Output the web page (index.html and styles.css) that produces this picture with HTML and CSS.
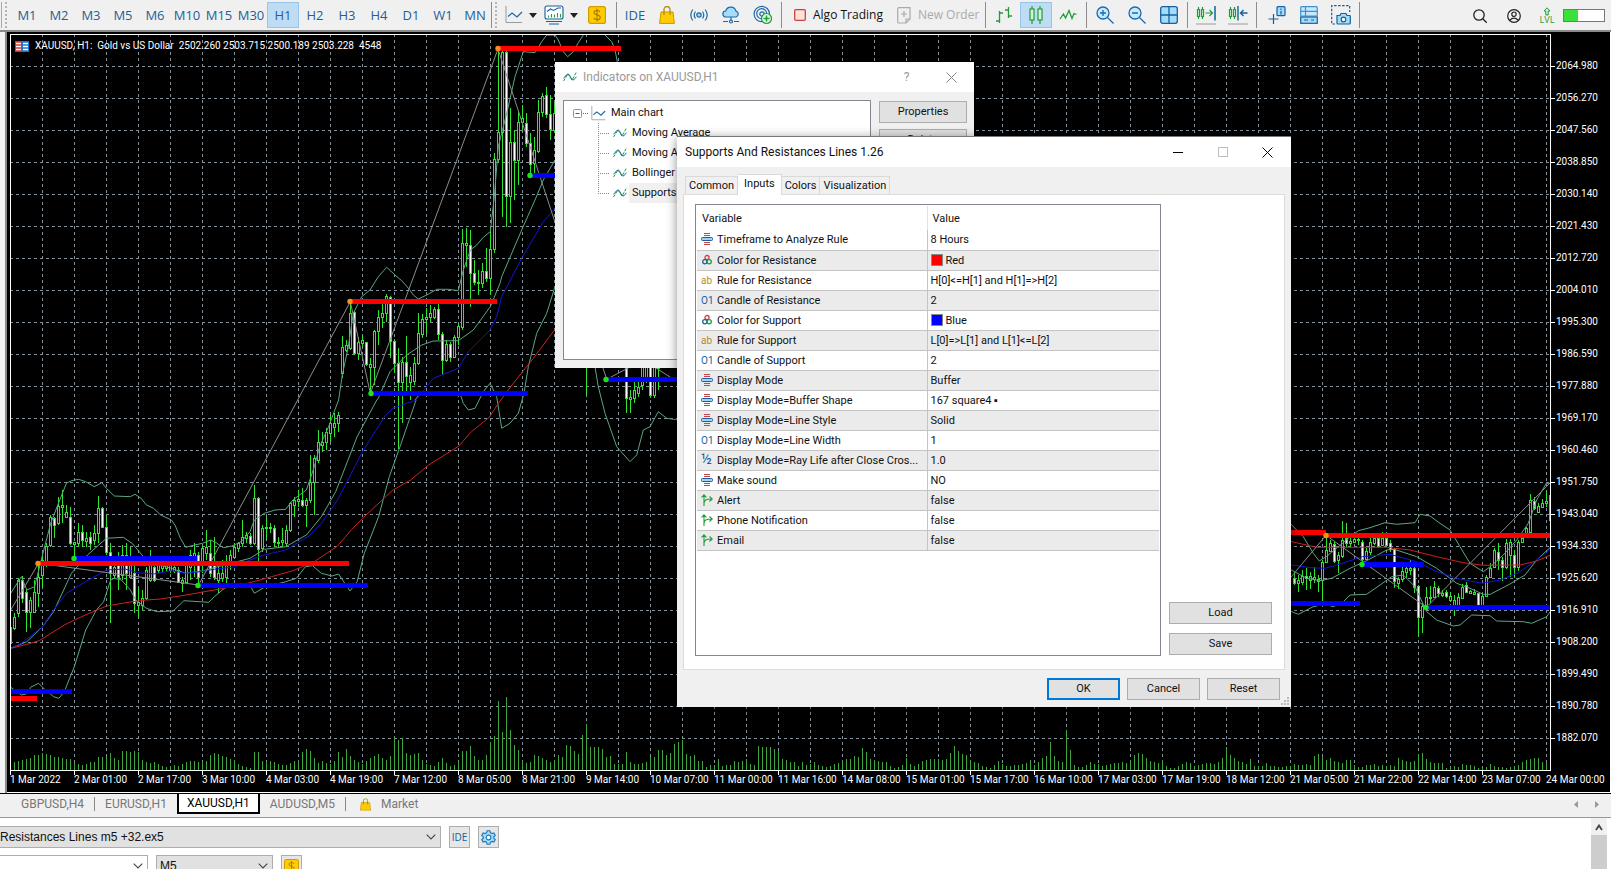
FILE: index.html
```html
<!DOCTYPE html>
<html lang="en">
<head>
<meta charset="utf-8">
<meta name="viewport" content="width=device-width, initial-scale=1">
<title>XAUUSD,H1</title>
<link rel="stylesheet" href="styles.css">
</head>
<body>
<svg class="defs" aria-hidden="true">
  <symbol id="i-enum" viewBox="0 0 12 12"><path d="M3 .5h6M3 2.500h6M3 9.500h6M3 11.500h6" stroke="#c8414f"/><rect x=".5" y="4.500" width="11" height="3" rx="1" fill="#9fd4f5" stroke="#1560a0"/></symbol>
  <symbol id="i-color" viewBox="0 0 12 12"><g fill="none" stroke-width="1.300"><circle cx="6" cy="3.600" r="2.100" stroke="#c8414f"/><circle cx="3.800" cy="7.800" r="2.100" stroke="#1560a0"/><circle cx="8.200" cy="7.800" r="2.100" stroke="#1f9d3a"/></g></symbol>
  <symbol id="i-bool" viewBox="0 0 12 12"><path d="M3 12V1M.5 3.500 3 .8l2.500 2.700M3 9.500C3 6 5 5 10.800 5M8.500 2.500 11.200 5 8.500 7.500" fill="none" stroke="#1f9d3a" stroke-width="1.100"/></symbol>
  <symbol id="i-wave" viewBox="0 0 14 14"><path d="M.5 11 5 4l4 6 4.500-8" fill="none" stroke="#1f9d3a" stroke-dasharray="3 1.200"/><path d="M.5 8C2 8 3 4 5 4s3 6 5 6 2-3 3.500-3" fill="none" stroke="#1560a0"/></symbol>
  <symbol id="i-axes" viewBox="0 0 18 18"><path d="M1 0v16.500h16" fill="none" stroke="#9a9a9a"/><path d="M3 10.500 7 7l5 4 5-5" fill="none" stroke="#1e6aa8" stroke-width="1.300"/></symbol>
  <symbol id="i-dollar" viewBox="0 0 18 18"><rect x=".6" y=".6" width="16.800" height="16.800" rx="2" fill="#fc0" stroke="#d39b00" stroke-width="1.200"/><path d="M12 6c-.5-1.200-1.500-1.700-3-1.700-1.700 0-3 .8-3 2.200 0 3.200 6.200 1.600 6.200 4.900 0 1.500-1.400 2.300-3.200 2.300-1.700 0-2.800-.7-3.200-2M9 2.500v13" fill="none" stroke="#b07d00" stroke-width="1.200"/></symbol>
  <symbol id="i-bag" viewBox="0 0 16 18"><path d="M2 6h12l1.400 11.400H.6z" fill="#fc0" stroke="#c99700"/><path d="M5 9V3.500a3 3 0 0 1 6 0V9" fill="none" stroke="#b98a00" stroke-width="1.300"/></symbol>
  <symbol id="i-chev" viewBox="0 0 10 6"><path d="m.7.700 4.300 4.300L9.300.7" fill="none" stroke="#444" stroke-width="1.100"/></symbol>
  <symbol id="i-caret" viewBox="0 0 8 5"><path d="M0 0h8L4 5z" fill="#222"/></symbol>
</svg>

<header class="toolbar">
  <nav class="group frames" aria-label="Timeframe">
    <button>M1</button><button>M2</button><button>M3</button><button>M5</button><button>M6</button><button>M10</button><button>M15</button><button>M30</button><button class="on">H1</button><button>H2</button><button>H3</button><button>H4</button><button>D1</button><button>W1</button><button>MN</button>
  </nav>
  <div class="group grip">
    <button class="wide" aria-label="Chart type"><svg width="18" height="18"><use href="#i-axes"/></svg><svg width="8" height="5"><use href="#i-caret"/></svg></button>
    <button class="wide" aria-label="Indicators"><svg width="20" height="20" viewBox="0 0 20 20" fill="none" stroke="#1560a0" stroke-width="1.100"><rect x="1" y="1" width="18" height="13" rx="2" fill="#fff"/><path d="m3 6.500 3.500-2.500 3 1.500L14 3h3"/><path d="M4.500 12.500v-2m3 2V9m3 3.500v-3m3 3V8m3 4.500V9" stroke="#1f9d3a"/><path d="M2 16.500h16M5 19h10"/></svg><svg width="8" height="5"><use href="#i-caret"/></svg></button>
    <button aria-label="Trade"><svg width="18" height="18"><use href="#i-dollar"/></svg></button>
  </div>
  <div class="group">
    <button class="ide">IDE</button>
    <button aria-label="Market"><svg width="16" height="18"><use href="#i-bag"/></svg></button>
    <button aria-label="Signals"><svg width="18" height="14" viewBox="0 0 18 14" fill="none" stroke="#1e6aa8" stroke-width="1.200"><circle cx="9" cy="7" r="2.200" fill="#9fd4f5"/><path d="M5.500 3.500q-2.500 3.500 0 7M12.500 3.500q2.500 3.500 0 7M2.800 1.500q-4 5.500 0 11M15.200 1.500q4 5.500 0 11"/></svg></button>
    <button aria-label="Virtual hosting"><svg width="18" height="18" viewBox="0 0 18 18" fill="none" stroke="#1e6aa8" stroke-width="1.200"><path d="M4 11a3 3 0 0 1-.3-6A5.300 5.300 0 0 1 14 5.200 3 3 0 0 1 14 11z" fill="#a5dcfb"/><path d="M9 11v4M1 15.500h5M12 15.500h5"/><circle cx="9" cy="15.500" r="1.500"/></svg></button>
    <button aria-label="Add service"><svg width="20" height="20" viewBox="0 0 20 20" fill="none" stroke="#1e6aa8" stroke-width="1.200"><path d="M16.500 9A7.700 7.700 0 1 0 9 16.700M13.700 9A5 5 0 1 0 9 13.700"/><circle cx="9" cy="9" r="2.200"/><circle cx="13.500" cy="13.500" r="5" fill="#e3f7e6" stroke="#1f9d3a"/><path d="M13.500 10.500v6m-3-3h6" stroke="#1f9d3a" stroke-width="1.500"/></svg></button>
  </div>
  <div class="group">
    <button class="label algo"><svg width="12" height="12" viewBox="0 0 12 12"><rect x=".7" y=".7" width="10.600" height="10.600" rx="1" fill="#fde3d6" stroke="#c8414f" stroke-width="1.300"/></svg>Algo Trading</button>
    <button class="label order" disabled><svg width="14" height="17" viewBox="0 0 14 17" fill="none" stroke="#aaa" stroke-width="1.200"><path d="M2 .7h11V12l-4 4H2Q.7 16 .7 15V2Q.7.700 2 .7zM13 12H9v4M7 4v6M4 7h6"/></svg>New Order</button>
  </div>
  <div class="group">
    <button aria-label="Bars"><svg width="18" height="16" viewBox="0 0 18 16" fill="none" stroke="#1f9d3a" stroke-width="1.300"><path d="M4.500 4v12M1 14h3.500M4.500 6H8M13.500 0v11M10 3h3.500M13.500 9H17"/></svg></button>
    <button class="on" aria-label="Candles"><svg width="16" height="18" viewBox="0 0 16 18" fill="#d8f5dc" stroke="#1f9d3a" stroke-width="1.200"><path d="M4 0v18M12 0v18"/><rect x="2" y="3" width="4" height="11"/><rect x="10" y="3" width="4" height="11"/></svg></button>
    <button aria-label="Line"><svg width="18" height="12" viewBox="0 0 18 12" fill="none" stroke="#1f9d3a" stroke-width="1.300"><path d="m1 10 3.500-5 2 4L10 1.500l3 8 2-5 2.500 1"/></svg></button>
  </div>
  <div class="group">
    <button aria-label="Zoom in"><svg width="18" height="18" viewBox="0 0 18 18" fill="#c5e9ff" stroke="#1e6aa8" stroke-width="1.300"><circle cx="7" cy="7" r="6"/><path d="m11.500 11.500 6 6M7 4v6M4 7h6"/></svg></button>
    <button aria-label="Zoom out"><svg width="18" height="18" viewBox="0 0 18 18" fill="#c5e9ff" stroke="#1e6aa8" stroke-width="1.300"><circle cx="7" cy="7" r="6"/><path d="m11.500 11.500 6 6M4 7h6"/></svg></button>
    <button aria-label="Tile windows"><svg width="18" height="18" viewBox="0 0 18 18" fill="#a5dcfb" stroke="#1560a0" stroke-width="1.300"><rect x=".7" y=".7" width="16.600" height="16.600" rx="2"/><path d="M9 1v16M1 9h16"/></svg></button>
  </div>
  <div class="group">
    <button aria-label="Chart shift"><svg width="20" height="20" viewBox="0 0 20 20" fill="none" stroke="#1f9d3a" stroke-width="1.200"><path d="M2.500 2v12M6.500 2v12"/><path d="M1.500 4.500h2v7h-2zM5.500 4.500h2v7h-2z" fill="#d8f5dc"/><path d="M9.500 8h7m-3-3 3 3-3 3"/><path d="M19 1v14.500" stroke="#1560a0" stroke-width="1.500"/><path d="M0 19h20" stroke="#aaa"/></svg></button>
    <button aria-label="Auto scroll"><svg width="20" height="20" viewBox="0 0 20 20" fill="none" stroke="#1f9d3a" stroke-width="1.200"><path d="M2.500 2v12M6.500 2v12"/><path d="M1.500 4.500h2v7h-2zM5.500 4.500h2v7h-2z" fill="#d8f5dc"/><path d="M19.500 8h-7m3-3-3 3 3 3M10 1v14.500" stroke="#1560a0" stroke-width="1.400"/><path d="M0 19h20" stroke="#aaa"/></svg></button>
  </div>
  <div class="group last">
    <button aria-label="Crosshair"><svg width="18" height="18" viewBox="0 0 18 18" fill="none" stroke="#1560a0" stroke-width="1.200"><path d="M5.500 8v10M.5 13h10"/><rect x="9" y=".7" width="8" height="9" rx="1" fill="#a5dcfb"/><path d="M13 2.500V4m0 1v3.500"/></svg></button>
    <button aria-label="Data window"><svg width="18" height="18" viewBox="0 0 18 18" fill="none" stroke="#4391c9" stroke-width="1.200"><rect x=".7" y=".7" width="16.600" height="9.300" rx="1" fill="#c5e9ff"/><path d="M1 5.300h16M5.500 1v9"/><rect x=".7" y="11" width="16.600" height="6.300" fill="#a5dcfb" stroke="#1560a0"/><path d="M4 14h4m3 0h3" stroke="#1560a0"/></svg></button>
    <button aria-label="Screenshot"><svg width="20" height="20" viewBox="0 0 20 20" fill="none" stroke="#1560a0" stroke-width="1.200"><path d="M4 19H.7V.7h18V7" stroke-dasharray="2.500 1.500"/><path d="M6 10.500h3l1-2h5l1 2h2.500q.8 0 .8.800V18q0 1-1 1H7q-1 0-1-1z" fill="#a5dcfb"/><circle cx="12.500" cy="14.500" r="2.300" fill="#fff"/></svg></button>
  </div>
  <div class="status">
    <button aria-label="Search"><svg width="14" height="14" viewBox="0 0 14 14" fill="none" stroke="#222" stroke-width="1.300"><circle cx="6" cy="6" r="5.200"/><path d="m9.700 9.700 4 4"/></svg></button>
    <button aria-label="Account"><svg width="14" height="14" viewBox="0 0 14 14" fill="none" stroke="#222" stroke-width="1.200"><circle cx="7" cy="7" r="6.300"/><circle cx="7" cy="5.200" r="2.200"/><path d="M2.700 11.300q4.300-4.500 8.600 0"/></svg></button>
    <button class="lvl" aria-label="Level"><svg width="8" height="9" viewBox="0 0 8 9"><path d="M4 .8 7 4H5.200v4H2.800V4H1z" fill="#d8f5dc" stroke="#1f9d3a"/></svg><span>LVL</span></button>
    <span class="meter"><i></i></span>
  </div>
</header>

<main class="workspace">
  <aside class="edge"></aside>
  <section class="chart" aria-label="XAUUSD H1 chart">
    <div class="plot">
      <svg id="plot" viewBox="10 34 1541 737" preserveAspectRatio="none"></svg>
      <p class="caption"><svg width="14" height="11" viewBox="0 0 14 11"><path fill="#d33" d="M0 0h7v11H0z"/><path fill="#1878d0" d="M7 0h7v11H7z"/><path d="M1 2.500h5M1 5.500h5M1 8.500h5M8 2.500h5M8 5.500h5M8 8.500h5" stroke="#fff" stroke-width="1.500"/></svg><span>XAUUSD, H1:&nbsp; Gold vs US Dollar&nbsp; 2502.260 2503.715 2500.189 2503.228&nbsp; 4548</span></p>
    </div>
    <ol class="prices" id="prices"></ol>
    <ol class="times" id="times"></ol>
  </section>

  <section class="window indicators" aria-label="Indicators">
    <header class="titlebar faded">
      <svg width="14" height="14"><use href="#i-wave"/></svg>
      <h2>Indicators on XAUUSD,H1</h2>
      <button aria-label="Help">?</button>
      <button aria-label="Close"><svg width="11" height="11" viewBox="0 0 11 11"><path d="m.5.500 10 10m0-10-10 10" stroke="#888"/></svg></button>
    </header>
    <div class="ind-body">
      <div class="tree">
        <div class="root"><svg width="18" height="15" viewBox="0 0 18 15"><rect x=".5" y="3.500" width="8" height="8" rx="1" fill="#fff" stroke="#8a929c"/><path d="M2.500 7.500h4" stroke="#445a80"/><path d="M10 7.500h6" stroke="#666" stroke-dasharray="1 1"/></svg><svg width="15" height="15"><use href="#i-axes"/></svg><span>Main chart</span></div>
        <ul>
          <li><svg width="14" height="14"><use href="#i-wave"/></svg><span>Moving Average</span></li>
          <li><svg width="14" height="14"><use href="#i-wave"/></svg><span>Moving Average</span></li>
          <li><svg width="14" height="14"><use href="#i-wave"/></svg><span>Bollinger Bands</span></li>
          <li><svg width="14" height="14"><use href="#i-wave"/></svg><span class="sel">Supports And Resistances</span></li>
        </ul>
      </div>
      <div class="side"><button class="btn">Properties</button><button class="btn">Delete</button></div>
    </div>
  </section>

  <section class="window inputs" aria-label="Supports And Resistances Lines">
    <header class="titlebar">
      <h2>Supports And Resistances Lines 1.26</h2>
      <button aria-label="Minimize"><svg width="10" height="10" viewBox="0 0 10 10"><path d="M0 5.500h10" stroke="#000"/></svg></button>
      <button aria-label="Maximize" disabled><svg width="10" height="10" viewBox="0 0 10 10"><path d="M.5.500h9v9h-9z" fill="none" stroke="#bbb"/></svg></button>
      <button aria-label="Close"><svg width="11" height="11" viewBox="0 0 11 11"><path d="m.5.500 10 10m0-10-10 10" stroke="#000"/></svg></button>
    </header>
    <div class="dialog-body">
      <div class="tabs"><button>Common</button><button class="on">Inputs</button><button>Colors</button><button>Visualization</button></div>
      <div class="pane">
        <div class="grid-box">
          <table>
            <thead><tr><th>Variable</th><th>Value</th></tr></thead>
            <tbody>
              <tr><td><svg><use href="#i-enum"/></svg>Timeframe to Analyze Rule</td><td>8 Hours</td></tr>
              <tr><td><svg><use href="#i-color"/></svg>Color for Resistance</td><td><i class="swatch red"></i>Red</td></tr>
              <tr><td><b class="ab">ab</b>Rule for Resistance</td><td>H[0]&lt;=H[1] and H[1]=&gt;H[2]</td></tr>
              <tr><td><b>O1</b>Candle of Resistance</td><td>2</td></tr>
              <tr><td><svg><use href="#i-color"/></svg>Color for Support</td><td><i class="swatch blue"></i>Blue</td></tr>
              <tr><td><b class="ab">ab</b>Rule for Support</td><td>L[0]=&gt;L[1] and L[1]&lt;=L[2]</td></tr>
              <tr><td><b>O1</b>Candle of Support</td><td>2</td></tr>
              <tr><td><svg><use href="#i-enum"/></svg>Display Mode</td><td>Buffer</td></tr>
              <tr><td><svg><use href="#i-enum"/></svg>Display Mode=Buffer Shape</td><td>167 square4 ▪</td></tr>
              <tr><td><svg><use href="#i-enum"/></svg>Display Mode=Line Style</td><td>Solid</td></tr>
              <tr><td><b>O1</b>Display Mode=Line Width</td><td>1</td></tr>
              <tr><td><b class="half">½</b>Display Mode=Ray Life after Close Cros...</td><td>1.0</td></tr>
              <tr><td><svg><use href="#i-enum"/></svg>Make sound</td><td>NO</td></tr>
              <tr><td><svg><use href="#i-bool"/></svg>Alert</td><td>false</td></tr>
              <tr><td><svg><use href="#i-bool"/></svg>Phone Notification</td><td>false</td></tr>
              <tr><td><svg><use href="#i-bool"/></svg>Email</td><td>false</td></tr>
            </tbody>
          </table>
        </div>
        <div class="pane-side"><button class="btn">Load</button><button class="btn">Save</button></div>
      </div>
      <footer><button class="btn primary">OK</button><button class="btn">Cancel</button><button class="btn">Reset</button></footer>
    </div>
    <svg class="resize" width="9" height="9" viewBox="0 0 9 9" fill="#bbb"><path d="M6 0h2v2H6zM3 3h2v2H3zM6 3h2v2H6zM0 6h2v2H0zM3 6h2v2H3zM6 6h2v2H6z"/></svg>
  </section>
</main>

<nav class="chart-tabs" aria-label="Open charts">
  <button>GBPUSD,H4</button><button class="div">EURUSD,H1</button><button class="on">XAUUSD,H1</button><button>AUDUSD,M5</button><button class="div market"><svg width="11" height="13" viewBox="0 0 16 18"><use href="#i-bag"/></svg>Market</button>
  <span class="arrows"><svg width="4" height="7" viewBox="0 0 4 7"><path d="M4 0v7L0 3.500z" fill="#999"/></svg><svg width="4" height="7" viewBox="0 0 4 7"><path d="M0 0v7l4-3.500z" fill="#999"/></svg></span>
</nav>

<section class="tester" aria-label="Strategy tester">
  <div class="rows">
    <div class="row">
      <label class="combo expert"><select aria-label="Expert"><option>Resistances Lines m5 +32.ex5</option></select><svg width="10" height="6"><use href="#i-chev"/></svg></label>
      <button class="sq">IDE</button>
      <button class="sq" aria-label="Settings"><svg width="15" height="15" viewBox="0 0 16 16" fill="#a5dcfb" stroke="#1e78b8" stroke-width="1.200"><path d="M6.500.8h3l.5 2.100 1.600.9 2.100-.6 1.500 2.600-1.600 1.500v1.400l1.600 1.500-1.500 2.600-2.100-.6-1.600.9-.5 2.100h-3L6 13.100l-1.600-.9-2.100.6-1.500-2.600 1.600-1.500V7.300L.8 5.800l1.500-2.600 2.100.6L6 2.900z"/><circle cx="8" cy="8" r="2.500" fill="#fff"/></svg></button>
    </div>
    <div class="row">
      <label class="combo symbol"><select aria-label="Symbol"><option></option></select><svg width="10" height="6"><use href="#i-chev"/></svg></label>
      <label class="combo period"><select aria-label="Period"><option>M5</option></select><svg width="10" height="6"><use href="#i-chev"/></svg></label>
      <button class="sq" aria-label="Currency"><svg width="15" height="15"><use href="#i-dollar"/></svg></button>
    </div>
  </div>
  <div class="scroll"><svg width="8" height="7" viewBox="0 0 8 7"><path d="m1 6 3-4.500L7 6" fill="none" stroke="#444" stroke-width="1.800"/></svg><i></i></div>
</section>
<script src="chart.js"></script>
</body>
</html>
```

FILE: styles.css
```css
* { box-sizing: border-box; }
body { margin: 0; height: 100vh; overflow: hidden; display: flex; flex-direction: column; background: #f0f0f0; color: #111; font: 12px/16px "Open Sans", "Noto Sans", sans-serif; }
button { font: inherit; color: inherit; background: none; border: 0; padding: 0; margin: 0; }
h2, p, ol, ul { margin: 0; padding: 0; list-style: none; font: inherit; }
svg { flex: none; }
.defs { position: absolute; width: 0; height: 0; }

.toolbar { display: flex; flex: none; height: 32px; padding: 2px 0 1px; border-bottom: 2px solid #8a8a8a; background: #f0f0f0; }
.group { display: flex; height: 26px; padding: 0 2px; border-right: 1px solid #8c8c8c; }
.group button { display: flex; align-items: center; justify-content: center; width: 32px; }
.toolbar .on { background: #bedcf4; box-shadow: inset 0 0 0 1px #98c5ea; }
.frames { padding: 0 0 0 11px; color: #1f5f96; background: linear-gradient(#aaa, #aaa) 1px 0 / 1px 100% no-repeat, repeating-linear-gradient(#b5b5b5 0 2px, transparent 2px 4px) 5px 0 / 2px 100% no-repeat; }
.grip { padding: 0 3px 0 9px; background: repeating-linear-gradient(#b5b5b5 0 2px, transparent 2px 4px) 3px 0 / 2px 100% no-repeat; }
.group .wide { width: 40px; gap: 6px; }
.group.last { padding-left: 4px; }
.ide { color: #1560a0; }
.frames button, .ide { font-size: 13px; }
.group .label { width: auto; gap: 7px; padding: 0 8px 0 10px; }
.group .order { color: #aaa; padding: 0 4px 0 6px; }
.status { display: flex; align-items: center; margin-left: auto; padding-right: 6px; }
.status button { width: 34px; height: 26px; display: grid; place-items: center; }
.status .lvl { align-content: center; color: #1f9d3a; font-size: 9px; line-height: 8px; width: 32px; }
.meter { width: 42px; height: 13px; border: 1px solid #777; background: #fff; }
.meter i { display: block; width: 35%; height: 100%; background: #3be03b; }

.workspace { position: relative; display: flex; flex: 1; min-height: 0; background: #fff; }
.edge { width: 7px; border-right: 2px solid #8a8a8a; background: #f3f3f3; }
.chart { flex: 1; display: grid; grid-template: minmax(0, 1fr) 21px / minmax(0, 1fr) 59px; padding: 2px 0 0 3px; margin: 0 1px 1px 0; background: #000; color: #fff; font: 10px/14px Roboto, "Open Sans", sans-serif; }
.plot { position: relative; }
.plot > svg { display: block; width: 100%; height: 100%; }
.caption { position: absolute; left: 5px; top: 5px; display: flex; align-items: center; gap: 6px; white-space: nowrap; }
.prices { display: flex; flex-direction: column; padding-top: 16px; }
.prices li { height: 32px; flex: 0 1 32px; line-height: 32px; display: flex; align-items: center; }
.prices li::before { content: ""; width: 4px; height: 1px; margin-right: 1px; background: #fff; }
.times { grid-column: 1 / 3; display: flex; padding-right: 64px; }
.times li { flex: 1 1 0; width: 0; white-space: nowrap; line-height: 18px; background: linear-gradient(#fff, #fff) 0 0 / 1px 4px no-repeat; }
.times li:last-child { flex: none; }

.window { position: absolute; background: #f0f0f0; color: #111; font: 11px/14px Roboto, "Open Sans", sans-serif; }
.titlebar { display: flex; align-items: center; height: 30px; padding-left: 8px; padding-right: 1px; background: #fff; font-size: 12px; }
.titlebar h2 { flex: 1; }
.titlebar button { width: 45px; height: 30px; display: grid; place-items: center; }
.faded { color: #999; gap: 6px; padding-right: 3px; }
.faded button { width: 39px; }
.btn { height: 22px; border: 1px solid #adadad; background: #e1e1e1; text-align: center; }
.primary { border: 2px solid #0078d7; }

.indicators { left: 555px; top: 30px; width: 419px; height: 306px; }
.ind-body { display: flex; gap: 8px; height: 276px; padding: 8px 7px 8px 8px; }
.tree { flex: 1; border: 1px solid #828790; background: #fff; padding: 2px 0 0 9px; }
.root { display: flex; align-items: center; height: 20px; }
.root span { margin-left: 5px; }
.tree ul { margin-left: 25px; background: repeating-linear-gradient(#888 0 1px, transparent 1px 2px) 0 0 / 1px 70px no-repeat; }
.tree li { display: flex; align-items: center; height: 20px; padding-left: 15px; background: repeating-linear-gradient(90deg, #888 0 1px, transparent 1px 2px) 0 10px / 11px 1px no-repeat; }
.tree li span { padding: 3px; margin-left: 2px; }
.sel { background: #f0f0f0; }
.side { width: 88px; display: grid; align-content: start; gap: 6px; padding-top: 1px; }

.inputs { left: 677px; top: 104px; width: 614px; height: 571px; border-top: 1px solid #777; box-shadow: 0 2px 10px rgba(0, 0, 0, .45); }
.dialog-body { padding: 7px 6px 0; }
.tabs { display: flex; align-items: flex-end; height: 20px; padding-left: 2px; }
.tabs button { height: 18px; padding: 1px 3px 0; border: 1px solid #d9d9d9; border-width: 1px 1px 0 0; }
.tabs button:first-child { border-left-width: 1px; }
.tabs .on { position: relative; height: 21px; margin-bottom: -1px; padding: 0 6px 2px; border-left-width: 0; background: #fff; }
.pane { display: flex; gap: 8px; height: 476px; padding: 9px 12px 13px 11px; border: 1px solid #dcdcdc; background: #fff; }
.grid-box { flex: 1; border: 1px solid #828790; padding: 1px; }
.pane-side { width: 103px; display: flex; flex-direction: column; justify-content: flex-end; gap: 9px; padding-bottom: 1px; }
table { width: 100%; border-collapse: collapse; table-layout: fixed; }
th { height: 24px; padding: 1px 5px 0; font-weight: 400; text-align: left; border-left: 1px solid #e2e2e2; }
th:first-child { width: 230px; border-left: 0; }
td { height: 20px; padding: 1px 3px 0; line-height: 14px; border-bottom: 1px solid #c4c4c4; border-left: 1px solid #c4c4c4; white-space: nowrap; vertical-align: middle; }
td:first-child { border-left: 0; }
tbody tr:nth-child(even) { background: #ebebeb; }
td svg, td b { display: inline-block; width: 12px; height: 12px; margin: 0 4px 0 0; vertical-align: -2px; overflow: visible; }
td b { color: #1560a0; font-weight: 400; font-size: 10px; line-height: 12px; vertical-align: 0; }
td .ab { color: #b98a1e; }
td .half { font-size: 14px; }
td:first-child { padding-left: 4px; }
.swatch { display: inline-block; width: 12px; height: 12px; margin-right: 3px; vertical-align: -2px; border: 1px solid #888; }
.red { background: #f00; }
.blue { background: #00f; }
.dialog-body footer { display: flex; justify-content: flex-end; gap: 7px; padding: 8px 5px 0 0; }
footer .btn { width: 73px; }
.resize { position: absolute; right: 1px; bottom: 1px; }

.chart-tabs { display: flex; flex: none; height: 25px; align-items: flex-start; padding-left: 11px; border-top: 1px solid #000; border-bottom: 1px solid #999; color: #777; font-family: Roboto, "Open Sans", sans-serif; }
.chart-tabs button { display: flex; align-items: center; justify-content: center; height: 20px; padding: 0 10px; }
.chart-tabs .div { border-left: 1px solid #888; height: 14px; margin-top: 3px; }
.chart-tabs .on { border: 1px solid #000; border-width: 0 2px 2px; padding: 0 8px; background: #fff; color: #000; }
.chart-tabs .market { gap: 10px; padding-left: 14px; }
.arrows { display: flex; gap: 17px; margin: 7px 12px 0 auto; }

.tester { display: flex; flex: none; height: 51px; background: #fff; overflow: hidden; }
.rows { flex: 1; display: grid; gap: 7px; align-content: start; padding-top: 8px; }
.row { display: flex; gap: 8px; }
.combo { display: flex; align-items: center; height: 22px; padding-right: 4px; border: 1px solid #adadad; background: #e1e1e1; }
.combo select { flex: 1; min-width: 0; height: 20px; appearance: none; border: 0; padding: 0 3px; background: none; color: #111; font: 12px "Liberation Sans", sans-serif; }
.expert { width: 441px; border-left: 0; }
.combo.expert select { padding: 0; }
.symbol { width: 148px; border-left: 0; background: #fff; }
.period { width: 117px; }
.sq { width: 21px; height: 22px; display: grid; place-items: center; border: 1px solid #adadad; background: #e6e6e6; color: #1560a0; font-size: 10px; }
.scroll { width: 16px; margin-right: 4px; display: flex; flex-direction: column; align-items: center; padding-top: 6px; background: #f0f0f0; }
.scroll i { flex: 1; width: 100%; margin-top: 4px; background: #cdcdcd; }

#plot .crisp { shape-rendering: crispEdges; }
#plot .grid { stroke: #84909a; stroke-dasharray: 3 3; fill: none; }
#plot .frame { stroke: #fff; fill: none; }
#plot .up { fill: #000; stroke: #2fe52f; }
#plot .down { fill: #fff; stroke: #2fe52f; }
#plot .vol { stroke: #3fa53f; }
#plot .band { stroke: #5aa882; fill: none; }
#plot .ma-blue { stroke: #1414d8; fill: none; }
#plot .ma-red { stroke: #d02020; fill: none; }
#plot .zigzag { stroke: #8c8c8c; fill: none; }
#plot .res { stroke: #f00; stroke-width: 5px; }
#plot .sup { stroke: #00f; stroke-width: 5px; }
#plot .dot-res { fill: #ff8c1a; }
#plot .dot-sup { fill: #19e619; }
```

FILE: chart.js
```js
const NS = 'http://www.w3.org/2000/svg';
const plot = document.getElementById('plot');
function add(tag, cls, attrs) {
  const el = document.createElementNS(NS, tag);
  el.setAttribute('class', cls);
  for (const k in attrs) el.setAttribute(k, attrs[k]);
  plot.appendChild(el);
}

// Axis labels
const prices = document.getElementById('prices');
for (let i = 0; i < 22; i++) {
  const li = document.createElement('li');
  li.textContent = (2064.98 - 8.71 * i).toFixed(3);
  prices.appendChild(li);
}
const times = ['1 Mar 2022', '2 Mar 01:00', '2 Mar 17:00', '3 Mar 10:00', '4 Mar 03:00', '4 Mar 19:00', '7 Mar 12:00', '8 Mar 05:00', '8 Mar 21:00', '9 Mar 14:00', '10 Mar 07:00', '11 Mar 00:00', '11 Mar 16:00', '14 Mar 08:00', '15 Mar 01:00', '15 Mar 17:00', '16 Mar 10:00', '17 Mar 03:00', '17 Mar 19:00', '18 Mar 12:00', '21 Mar 05:00', '21 Mar 22:00', '22 Mar 14:00', '23 Mar 07:00', '24 Mar 00:00'];
for (const t of times) {
  const li = document.createElement('li');
  li.textContent = t;
  document.getElementById('times').appendChild(li);
}

// Grid
let g = '';
for (let x = 42.5; x < 1550; x += 32) g += `M${x} 34V770`;
for (let y = 66.5; y < 760; y += 32) g += `M10 ${y}H1551`;
add('path', 'grid crisp', { d: g });

// Tick volumes, one per bar
const volumes = [0,8,9,10,11,12,15,15,17,16,15,13,13,12,11,11,7,6,5,6,8,8,13,13,13,17,12,10,19,19,18,19,18,10,8,7,8,6,4,3,4,5,4,6,8,9,9,8,8,9,15,17,16,14,13,11,10,6,4,3,2,18,18,9,8,9,8,6,5,5,7,9,9,18,21,19,12,7,9,7,6,9,18,13,21,14,10,8,6,9,12,14,16,12,10,14,33,30,32,17,15,16,17,10,6,5,4,8,12,7,4,5,8,19,19,24,14,10,10,15,28,34,69,38,73,40,25,20,9,7,8,15,14,12,10,8,10,15,13,25,24,19,16,35,46,23,23,23,21,13,14,6,6,6,18,8,6,6,7,8,13,13,20,20,15,17,26,28,30,16,14,15,9,9,3,5,5,11,4,5,5,9,8,9,11,6,5,24,23,23,23,21,19,11,10,8,8,4,8,5,6,8,5,4,3,4,6,7,9,11,11,14,13,22,18,11,10,9,8,8,4,2,3,5,12,6,4,6,9,10,11,11,11,10,11,17,24,19,16,15,10,8,7,4,3,2,5,9,6,4,4,5,5,6,7,10,5,8,12,14,28,14,9,8,40,20,5,3,3,5,8,6,6,4,5,6,7,7,8,7,9,15,17,16,12,9,8,7,10,4,2,2,4,6,8,7,4,5,6,7,7,6,8,12,23,15,12,9,8,6,11,4,4,4,7,4,4,3,3,4,4,6,5,5,6,5,14,16,13,10,12,9,8,7,10,10,5,3,3,5,5,6,4,5,4,5,4,12,10,9,8,9,16,17,11,8,7,7,7,2,3,4,3,6,5,5,4,2,2,3,6,4,3,3,2,3,4,5,8,10,11,12,12,8,7,6,8,3,2,2,2,5,8];
let v = '';
volumes.forEach((h, i) => { v += `M${10.5 + 4 * i} 770V${770 - h}`; });
add('path', 'vol crisp', { d: v });

// Polyline groups: x = x0 + px / sx, y = y0 + py / 3
const A = [0, 2.8, 400], B = [0, 3, 30], C = [400, 3, 30], D = [1270, 3, 460];
function line(cls, ...parts) {
  const pts = [];
  for (const [[x0, sx, y0], s] of parts) {
    for (const p of s.split(' ')) {
      const [x, y] = p.split(',').map(Number);
      pts.push((x0 + x / sx).toFixed(1) + ',' + (y0 + y / 3).toFixed(1));
    }
  }
  add('polyline', cls, { points: pts.join(' ') });
}

// Candles: high, body top, body bottom, low, 1 when the bar closed lower
function candles(start, y0, rows) {
  rows.trim().split(/\s+/).forEach((row, i) => {
    const [h, t, b, l, d] = row.split(',').map(Number);
    const x = 10 + 4 * (start + i), y = (n) => Math.round(y0 + n / 3);
    const cls = (d ? 'down' : 'up') + ' crisp';
    add('path', cls, { d: `M${x + .5} ${y(h)}V${y(l)}` });
    add('rect', cls, { x: x - .5, y: y(t) + .5, width: 2, height: Math.max(1, y(b) - y(t)) });
  });
}
candles(0, 400, `640,680,730,735 640,650,685,690 535,540,640,650 528,540,595,610,1 570,575,635,697,1 590,600,637,685 540,575,635,640 495,530,580,620 460,480,525,560 430,437,487,500 345,350,435,440 350,355,375,415,1 290,318,370,375 270,315,320,370 315,335,350,355 320,352,430,435,1 425,425,432,475 370,395,430,440 375,395,420,440,1 395,415,422,440 395,412,430,450,1 375,400,420,435 288,325,400,430 320,325,382,385,1 345,382,455,465,1 430,455,520,668,1 470,500,525,535 455,490,530,570,1 435,465,525,540 430,465,520,570,1 440,470,530,535 490,520,610,640,1 560,605,615,655 570,595,615,630 500,510,595,600 450,490,540,545 490,500,540,545,1 480,495,510,520 480,490,505,515 485,495,505,515 480,490,510,520 490,500,512,520 500,510,545,550,1 530,540,550,575 480,495,545,550 450,465,500,540 430,460,470,530 455,465,530,560,1 435,445,490,520 390,440,460,480 420,460,520,530,1 410,490,530,540,1 490,520,540,580 480,520,535,545 465,490,530,550 450,465,495,510 430,440,470,475 425,430,445,455 360,410,430,440 395,405,415,430 400,408,430,435,1 255,293,430,435 290,293,447,490,1 375,385,445,455 350,380,385,420 370,380,385,400 375,383,425,440,1 410,425,430,440 385,420,425,440 375,390,430,440 305,310,390,395 290,300,315,350 270,297,302,320 265,300,315,320,1 295,300,315,380 165,245,300,310 165,175,245,345 90,125,180,190 95,125,135,155 85,95,125,150 45,70,100,125 40,70,80,110 35,45,70,95`);
candles(83, 30, `918,950,1030,1045 930,945,960,965 815,848,955,960 843,845,970,975,1 920,935,970,990 915,930,938,955 935,937,1003,1008,1 985,1003,1010,1090 900,902,1010,1065 840,862,902,945 820,848,862,895 793,798,848,875 798,800,932,985,1 928,932,1000,1030,1 955,1000,1055,1258,1 980,995,1055,1180 918,995,1038,1090,1 1010,1035,1055,1110 980,1000,1052,1065 850,910,1000,1005 852,868,912,925 835,860,868,912 825,850,862,875 830,838,862,868 822,838,912,930,1 905,912,990,1035,1 930,942,990,995 935,942,980,995,1 915,920,980,985 880,888,922,945 598,640,890,900 595,640,645,710 600,645,730,830,1 690,730,755,765,1 720,757,760,795 700,722,760,775 655,722,745,755,1 590,658,745,795 368,388,658,670 55,305,388,395 60,65,305,560 60,65,497,592,1 235,337,497,580 300,337,390,510,1 245,275,390,465 225,265,275,300 250,278,340,350,1 310,340,402,435,1 320,360,400,430 210,245,362,370 190,197,245,260 172,195,252,265,1 195,252,297,330,1 220,250,300,310`);
candles(144, 30, `900,950,1000,1095`);
candles(154, 30, `980,1000,1105,1150,1 1080,1102,1107,1150 1050,1080,1105,1120 1055,1070,1090,1100 980,1000,1065,1080 980,1000,1040,1060 980,1000,1095,1105,1 980,1000,1095,1105 980,1000,1014,1080`);
candles(321, 460, `335,355,370,375,1 345,360,370,395 330,348,365,375 325,348,355,390,1 335,348,360,388 320,352,358,370 345,357,362,395 300,307,360,425 235,270,307,310 240,250,272,275 245,252,302,310,1 275,285,300,340 183,240,287,295 188,235,250,265,1 233,243,248,265 230,237,245,250 233,237,240,255 240,245,297,305,1 265,272,297,300 235,245,275,285 230,235,250,255 230,235,258,265,1 215,235,255,258 230,235,255,260,1 240,250,268,275,1 265,268,362,385,1 350,358,368,388 320,333,358,365 310,325,335,355 300,325,330,345 315,325,380,400,1 375,378,470,530,1 430,438,470,518 380,412,440,450 378,410,415,430 363,380,412,415 378,385,400,412,1 390,398,405,412 390,395,408,415,1 395,407,420,425 405,420,435,467 400,412,435,440 373,380,415,418 365,375,395,400,1 390,392,400,403 388,395,402,405 398,400,437,440,1 400,408,437,440 345,350,408,412 310,325,352,355 265,270,320,325 250,275,300,330,1 290,300,320,362,1 237,250,320,328 238,245,285,350 270,285,320,353,1 240,245,320,332 230,235,245,250 200,205,220,235 103,120,217,220 110,122,145,150,1 130,138,155,157 118,130,142,145 92,122,130,140 100,105,180,185,1`);

// Bollinger bands
line('band', [A, '30,580 60,530 75,570 97,560 119,465 142,370 160,320 186,250 200,242 220,238 240,245 264,260 285,248 298,265 320,288 365,290 378,283 395,295 410,315 430,325 450,345 480,360 490,375 505,415 520,442 545,435 567,430 590,420 605,428 625,443 650,438 675,425 700,395 712,360 740,340 770,330 800,328 820,300 858,270 880,200 895,140 920,80 948,0'], [B, '1027,1035 1045,950 1060,850 1085,800 1110,780 1135,740 1160,712 1185,735 1205,752 1228,778 1240,795 1255,807 1280,795 1310,778 1345,778 1375,782 1390,720 1411,660 1430,645 1450,622 1471,605'], [C, '283,500 295,350 320,250 345,140 370,65 405,68 425,35 440,15 465,15 475,30 490,65 503,80 520,65 535,38 550,15']);
line('band', [C, '615,15 635,35 645,60 652,95 665,150']);
line('band', [A, '30,745 75,725 119,680 150,635 200,520 245,465 298,415 345,412 370,430 400,468 430,490 480,505 520,520 570,512 610,500 700,475 740,448 800,440 858,405 900,350 940,275 1000,110 1055,0'], [B, '1135,1105 1170,1025 1220,975 1265,945 1300,933 1375,932 1420,900 1471,830 1500,760'], [C, '305,740 365,600 405,510 430,450 465,390']);
line('band', [A, '30,862 60,885 80,880 85,862 108,850 125,868 150,890 165,895 180,875 208,800 240,690 270,630 290,605 310,540 320,535 340,540 365,570 380,600 410,625 440,635 485,633 515,602 585,607 600,590 640,555 700,555 712,580 740,562 800,545 830,535 855,500 875,497 900,520 930,528 948,522 980,573 1000,545 1020,460 1060,350 1090,230 1120,140 1165,0'], [C, '45,1110 60,1090 180,1090 190,1120 205,1140 225,1135 250,1085 270,1060 290,1100 305,1195 330,1180 355,1150 372,1090 385,1010 410,910 440,850 465,770']);
line('band', [C, '580,980 595,1070 615,1150 650,1250 690,1295 710,1275 730,1200 750,1190 775,1145 800,1165 835,1170']);
line('band', [D, '60,190 100,230 130,280 148,303 168,290 200,265 235,235 265,212 300,203 345,188 380,193 435,188 450,163 480,168 510,190 540,210 570,260 600,310 640,335 661,320 700,285 740,240 775,190 800,120 829,70 841,70']);
line('band', [D, '60,328 110,355 150,362 185,355 240,325 290,302 350,270 373,268 440,290 500,325 560,370 600,385 640,403 661,403 720,372 765,345 800,300 841,262']);
line('band', [D, '60,453 85,463 110,450 130,440 165,432 190,440 220,425 240,405 290,403 330,375 365,350 400,345 435,380 470,455 500,480 550,498 570,495 605,465 660,467 680,483 760,485 785,490 830,470 841,455']);

// Moving averages
line('ma-blue', [A, '30,745 60,730 119,680 150,630 186,580 240,545 298,510 350,507 385,518 430,522 480,512 520,520 560,515 600,508 660,500 700,480 740,465 800,450 865,408 900,370 945,300 1015,155 1050,95 1080,45 1100,25 1165,0'], [C, '60,1095 100,1045 175,1015 205,965 270,900 290,860 305,800 365,685 430,575 465,535']);
line('ma-blue', [D, '60,314 120,323 165,325 200,315 277,290 360,283 440,305 500,335 560,355 635,370 690,360 745,338 800,300 841,268']);
line('ma-red', [A, '30,745 75,733 110,722 180,675 208,660 250,640 298,618 370,605 410,600 450,597 520,585 600,570 640,562 700,548 760,530 820,512 880,485 945,438 985,388 1015,355 1050,320 1100,270 1150,240 1200,195 1285,138 1320,95 1370,52'], [C, '295,1120 340,1060 400,985 465,898']);
line('ma-red', [D, '60,244 140,262 350,262 420,270 500,290 580,308 640,316 750,315 800,303 841,285']);

// Zigzag through the pivots
line('zigzag', [A, '30,630 108,490 556,555'], [B, '1051,815 1111,1090 1494,57 1820,1048 1930,990 2035,1057']);
line('zigzag', [D, '60,355 168,226 469,442 841,68']);

// Resistance and support levels: x1, x2, y, 1 when the pivot dot shows
const res = [[498, 621, 48.5, 1], [350, 497, 301.5, 1], [38, 349, 563.5, 1], [10, 37, 698.5, 0], [1280, 1326, 532.5, 0], [1326, 1551, 535.5, 1]];
const sup = [[371, 528, 393.5, 1], [74, 197, 558.5, 1], [198, 368, 585.5, 1], [10, 72, 691.5, 0], [530, 560, 175.5, 1], [606, 680, 379.5, 1], [1362, 1424, 564.5, 1], [1280, 1360, 603.5, 0], [1426, 1551, 607.5, 1]];
for (const [cls, list] of [['sup', sup], ['res', res]]) {
  for (const [x1, x2, y, dot] of list) {
    add('path', cls + ' crisp', { d: `M${x1} ${y}H${x2}` });
    if (dot) add('circle', 'dot-' + cls, { cx: x1, cy: y, r: 2.7 });
  }
}
add('path', 'frame crisp', { d: 'M10.500 34V770.500H1550.500V34.500H10' });
```
